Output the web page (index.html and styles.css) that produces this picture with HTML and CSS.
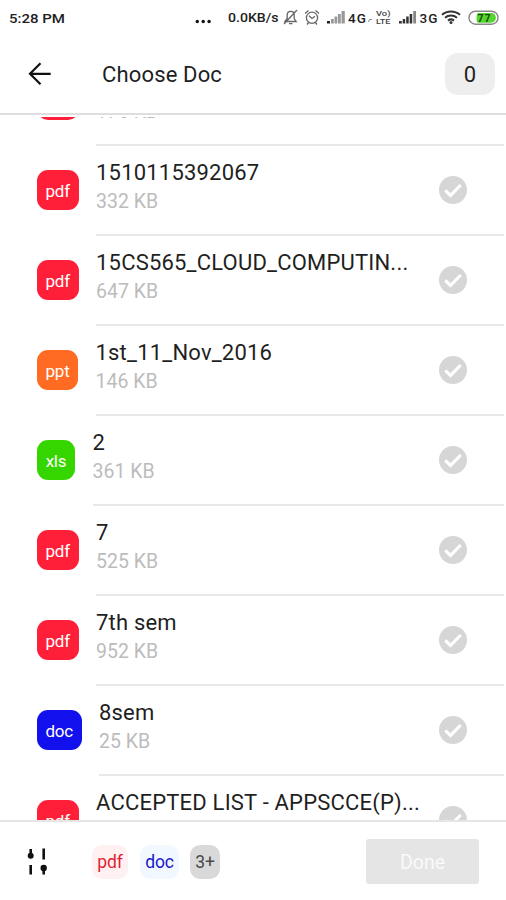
FILE: index.html
```html
<!DOCTYPE html>
<html lang="en">
<head>
<meta charset="utf-8">
<title>Choose Doc</title>
<link rel="stylesheet" href="styles.css">
</head>
<body>
<svg class="sprite" aria-hidden="true">
  <symbol id="check" viewBox="0 0 28 28"><circle cx="14" cy="14" r="14" fill="#d6d6d6"/><path d="M6.3 14.3l5.2 5.2L21.7 9" fill="none" stroke="#fff" stroke-width="3.2"/></symbol>
</svg>
<div class="screen">
  <div class="status">
    <svg class="status-svg" viewBox="0 0 506 36" width="506" height="36">
      <g class="status-text">
        <text x="9" y="22.5" textLength="56" lengthAdjust="spacingAndGlyphs">5:28 PM</text>
        <text x="228" y="22.2" textLength="50.5" lengthAdjust="spacingAndGlyphs">0.0KB/s</text>
        <text x="348" y="22.500" textLength="18">4G</text>
        <text x="419.500" y="22.500" textLength="18">3G</text>
      </g>
      <g fill="#111"><circle cx="197.300" cy="21.500" r="1.700"/><circle cx="203.200" cy="21.500" r="1.700"/><circle cx="209.100" cy="21.500" r="1.700"/></g>
      <g fill="none" stroke="#666" stroke-width="1.300">
        <path d="M285 21.500l2.200-3v-3.500c0-2.500 1.500-3.600 3.600-3.600s3.400 1.400 3.400 3.600v3.500l2 3zM289 23.700h3.500M284 24l13-14"/>
        <circle cx="312" cy="17.800" r="5.600"/><path d="M309 15.800l3 2.700 3-2.300M305 13.500l3.500-3M315.500 10.500l3.500 3M308.500 22.500l-1.500 2M315.500 22.500l1.500 2"/>
      </g>
      <g fill="#999"><path fill="#222" d="M327 21h3v2.500h-3z"/><path d="M331 19h2.800v4.500h-2.800zM334.500 16.500h2.800v7h-2.800zM338 14h2.800v9.500H338zM341.500 11h3.300v12.500h-3.300z"/></g>
      <path d="M368.500 22l1-2.500h2.500" fill="none" stroke="#888"/>
      <g class="volte"><text x="376" y="16.300" textLength="14.500" lengthAdjust="spacingAndGlyphs">Vo)</text><text x="376" y="24.200" textLength="14.500" lengthAdjust="spacingAndGlyphs">LTE</text></g>
      <g fill="#333"><path d="M399 21h2.800v2.500H399zM402.700 19h2.500v4.500h-2.500zM406.200 16.500h2.500v7h-2.500zM409.700 14h2.500v9.500h-2.500z"/><path fill="#888" d="M413.200 11h2.800v12.500h-2.800z"/></g>
      <g fill="none" stroke="#333" stroke-width="2"><path d="M442 14.800c5-4.500 13-4.500 18 0M445 17.800c3.500-3 8.500-3 12 0M448 20.600c2-1.600 4-1.600 6 0"/></g>
      <circle cx="451" cy="22.600" r="1.500" fill="#333"/>
      <rect x="469" y="11.200" width="29" height="13" rx="6.500" fill="#fff" stroke="#888" stroke-width="1.400"/>
      <path d="M478 12.900h13a4.900 4.900 0 0 1 0 9.800H478c-2 0-2-9.800 0-9.800z" fill="#55d52d"/>
      <text class="battery" x="477.500" y="21.500" textLength="13">77</text>
    </svg>
  </div>
  <header class="header">
    <svg class="back" viewBox="0 0 24 24" width="24" height="24"><path d="M22.700 11.800H2M12.500 1.300L2 11.800l10.500 10.500" fill="none" stroke="#111" stroke-width="2.200"/></svg>
    <h1 class="title">Choose Doc</h1>
    <div class="count"><span class="count-value">0</span></div>
  </header>
  <main class="viewport">
    <div class="list">
      <div class="row"><div class="tag pdf"></div><div class="body"><div class="info"><div class="name"></div><div class="size">176 KB</div></div></div></div>
      <div class="row"><div class="tag pdf">pdf</div><div class="body"><div class="info"><div class="name">1510115392067</div><div class="size">332 KB</div></div><svg class="check"><use href="#check"/></svg></div></div>
      <div class="row"><div class="tag pdf">pdf</div><div class="body"><div class="info"><div class="name">15CS565_CLOUD_COMPUTIN...</div><div class="size">647 KB</div></div><svg class="check"><use href="#check"/></svg></div></div>
      <div class="row"><div class="tag ppt">ppt</div><div class="body"><div class="info"><div class="name">1st_11_Nov_2016</div><div class="size">146 KB</div></div><svg class="check"><use href="#check"/></svg></div></div>
      <div class="row"><div class="tag xls">xls</div><div class="body"><div class="info"><div class="name">2</div><div class="size">361 KB</div></div><svg class="check"><use href="#check"/></svg></div></div>
      <div class="row"><div class="tag pdf">pdf</div><div class="body"><div class="info"><div class="name">7</div><div class="size">525 KB</div></div><svg class="check"><use href="#check"/></svg></div></div>
      <div class="row"><div class="tag pdf">pdf</div><div class="body"><div class="info"><div class="name">7th sem</div><div class="size">952 KB</div></div><svg class="check"><use href="#check"/></svg></div></div>
      <div class="row"><div class="tag doc">doc</div><div class="body"><div class="info"><div class="name">8sem</div><div class="size">25 KB</div></div><svg class="check"><use href="#check"/></svg></div></div>
      <div class="row"><div class="tag pdf">pdf</div><div class="body"><div class="info"><div class="name">ACCEPTED LIST - APPSCCE(P)...</div></div><svg class="check"><use href="#check"/></svg></div></div>
    </div>
  </main>
  <footer class="footer">
    <svg class="filter" viewBox="0 0 22 28" width="22" height="28"><g stroke="#111" stroke-width="2.600"><path d="M3.700 1v9M16.700 .5v11M3.700 17v9.500M16.700 17v9.500"/></g><circle cx="3.700" cy="7.800" r="3" fill="#111"/><circle cx="16.700" cy="20" r="3.200" fill="#111"/></svg>
    <div class="chips"><span class="chip chip-pdf">pdf</span><span class="chip chip-doc">doc</span><span class="chip chip-more">3+</span></div>
    <div class="done">Done</div>
  </footer>
</div>
</body>
</html>
```
FILE: styles.css
```css
* { box-sizing: border-box; }
body { margin: 0; background: #fff; font-family: Roboto, sans-serif; color: #1f1f1f; }
.sprite { display: none; }
.screen { width: 506px; height: 900px; display: flex; flex-direction: column; overflow: hidden; }
.status { height: 36px; flex: none; }
.status-svg { display: block; }
.status-text { font-size: 13.5px; font-weight: 500; fill: #222; }
.volte { font-size: 8px; font-weight: 500; fill: #444; }
.battery { font-size: 10.5px; font-weight: 700; fill: #174d0b; }
.header { height: 79px; flex: none; display: flex; align-items: center; padding: 0 11px 2px 28px; border-bottom: 2px solid #dedede; }
.back { flex: none; }
.title { margin: 2px 0 0 50px; flex: 1; font-size: 22px; font-weight: 400; letter-spacing: 0.15px; line-height: 30px; }
.count { width: 50px; height: 42px; border-radius: 13px; background: #eee; font-size: 22px; line-height: 43px; text-align: center; }
.viewport { height: 703px; margin-top: 2px; flex: none; overflow: hidden; }
.list { margin-top: -61px; }
.row { display: flex; height: 90px; padding: 0 2px 0 37px; }
.tag { flex: none; height: 40px; margin: 24px 17.500px 0 0; border-radius: 11px; color: #fff; font-size: 17px; letter-spacing: -0.2px; line-height: 42px; text-align: center; }
.pdf { width: 41.500px; background: #ff1f38; }
.ppt { width: 41px; background: #ff6b22; }
.xls { width: 38px; background: #35d600; }
.doc { width: 44.500px; background: #1210ec; }
.body { flex: 1; display: flex; justify-content: space-between; border-bottom: 2px solid #e8e8e8; padding-right: 37px; min-width: 0; }
.info { padding-top: 11px; white-space: nowrap; width: 325px; }
.name { font-size: 22px; letter-spacing: 0.2px; line-height: 32px; height: 33px; }
.size { font-size: 19.500px; line-height: 24px; color: #bcbcbc; }
.check { flex: none; width: 28px; height: 28px; margin-top: 30px; }
.footer { height: 80px; flex: none; display: flex; align-items: center; border-top: 2px solid #e6e6e6; padding: 1px 27px 0 27px; }
.filter { flex: none; }
.chips { display: flex; margin-left: 43px; flex: 1; }
.chip { height: 34px; border-radius: 10px; font-size: 17.500px; letter-spacing: -0.1px; line-height: 34px; text-align: center; }
.chip-pdf { width: 36px; background: #fff0f1; color: #e01f35; }
.chip-doc { width: 39px; margin-left: 12px; background: #f1f8ff; color: #1a18c8; }
.chip-more { width: 30px; margin-left: 11px; background: #d9d9d9; color: #4a4a4a; }
.done { width: 113px; height: 45px; border-radius: 3px; background: #e5e5e5; color: #fafafa; font-size: 19.500px; line-height: 47px; text-align: center; }
```
